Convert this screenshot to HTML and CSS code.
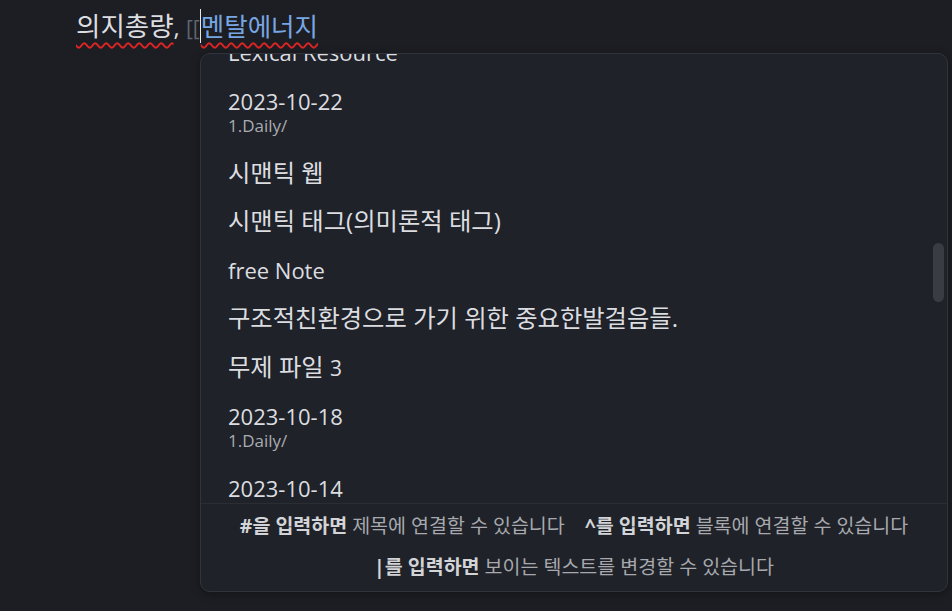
FILE: index.html
```html
<!DOCTYPE html>
<html lang="ko">
<head>
    <meta charset="UTF-8">
    <title>Link suggest</title>
    <link rel="stylesheet" href="styles.css">
</head>
<body>
    <div id="editor">
        <div class="editor-line">
            <span class="ko misspelled">의지총량</span>, <span class="bracket">[[</span><span class="ko link-text misspelled">멘탈에너지</span>
        </div>
    </div>

    <div id="suggest-popup">
        <div id="suggest-list">
            <div class="suggest-inner">
                <div class="suggest-item">
                    <div class="item-title">Lexical Resource</div>
                </div>
                <div class="suggest-item">
                    <div class="item-title">2023-10-22</div>
                    <div class="item-path">1.Daily/</div>
                </div>
                <div class="suggest-item">
                    <div class="item-title ko">시맨틱 웹</div>
                </div>
                <div class="suggest-item">
                    <div class="item-title ko">시맨틱 태그(의미론적 태그)</div>
                </div>
                <div class="suggest-item">
                    <div class="item-title">free Note</div>
                </div>
                <div class="suggest-item">
                    <div class="item-title ko">구조적친환경으로 가기 위한 중요한발걸음들.</div>
                </div>
                <div class="suggest-item">
                    <div class="item-title ko">무제 파일 <span class="num">3</span></div>
                </div>
                <div class="suggest-item">
                    <div class="item-title">2023-10-18</div>
                    <div class="item-path">1.Daily/</div>
                </div>
                <div class="suggest-item">
                    <div class="item-title">2023-10-14</div>
                </div>
                <div class="suggest-item">
                    <div class="item-title">2023-10-12</div>
                </div>
            </div>
            <div class="scroll-thumb"></div>
        </div>
        <div id="instructions">
            <div class="instruction"><span class="instruction-cmd">#을 입력하면</span>제목에 연결할 수 있습니다</div>
            <div class="instruction"><span class="instruction-cmd">^를 입력하면</span>블록에 연결할 수 있습니다</div>
            <div class="instruction"><span class="instruction-cmd">|를 입력하면</span>보이는 텍스트를 변경할 수 있습니다</div>
        </div>
    </div>
</body>
</html>
```

FILE: styles.css
```css
body, html {
    margin: 0;
    padding: 0;
    height: 100%;
    overflow: hidden;
    background-color: #1c1e23;
    font-family: 'Open Sans', 'Noto Sans CJK KR', sans-serif;
    color: #dcdde0;
}
#editor {
    padding: 8px 0 0 76px;
}
.editor-line {
    font-size: 24px;
    line-height: 36px;
    color: #dcdde0;
    white-space: nowrap;
}
.editor-line .ko {
    font-size: 26.5px;
}
.editor-line .link-text {
    font-size: 25.5px;
}
.misspelled {
    text-decoration: underline wavy #e02424;
    text-decoration-thickness: 1.5px;
    text-underline-offset: 6px;
    text-decoration-skip-ink: none;
}
.bracket {
    color: #5f6570;
    font-size: 21px;
}
.link-text {
    color: #78a6e2;
    border-left: 1px solid #e6e6e6;
}

#suggest-popup {
    position: absolute;
    left: 200px;
    top: 53px;
    width: 748px;
    height: 539px;
    box-sizing: border-box;
    background-color: #1f2228;
    border: 1px solid #31343a;
    border-radius: 10px;
    display: flex;
    flex-direction: column;
    overflow: hidden;
    box-shadow: 0 2px 10px rgba(0, 0, 0, 0.35);
}
#suggest-list {
    flex-grow: 1;
    position: relative;
    overflow: hidden;
}
.suggest-inner {
    margin-top: -26px;
}
.suggest-item {
    padding: 12px 27px 12.5px;
}
.item-title {
    font-size: 22px;
    line-height: 24px;
    color: #dcdde0;
    white-space: nowrap;
}
.item-title.ko {
    font-size: 24.3px;
}
.item-title .num {
    font-size: 21px;
}
.item-path {
    font-size: 17px;
    line-height: 21.5px;
    padding-top: 2px;
    color: #a9acb1;
}
.scroll-thumb {
    position: absolute;
    right: 3px;
    top: 189px;
    width: 11px;
    height: 59px;
    border-radius: 6px;
    background-color: #393c42;
}

#instructions {
    flex-shrink: 0;
    border-top: 1px solid #2a2d33;
    padding: 10px 20px 12px;
    display: flex;
    flex-wrap: wrap;
    justify-content: center;
    column-gap: 20px;
    row-gap: 17px;
    font-size: 19.5px;
    line-height: 24px;
    color: #a7a9ae;
}
.instruction {
    white-space: nowrap;
}
.instruction-cmd {
    font-weight: 700;
    color: #d2d4d8;
    margin-right: 5px;
}
```
